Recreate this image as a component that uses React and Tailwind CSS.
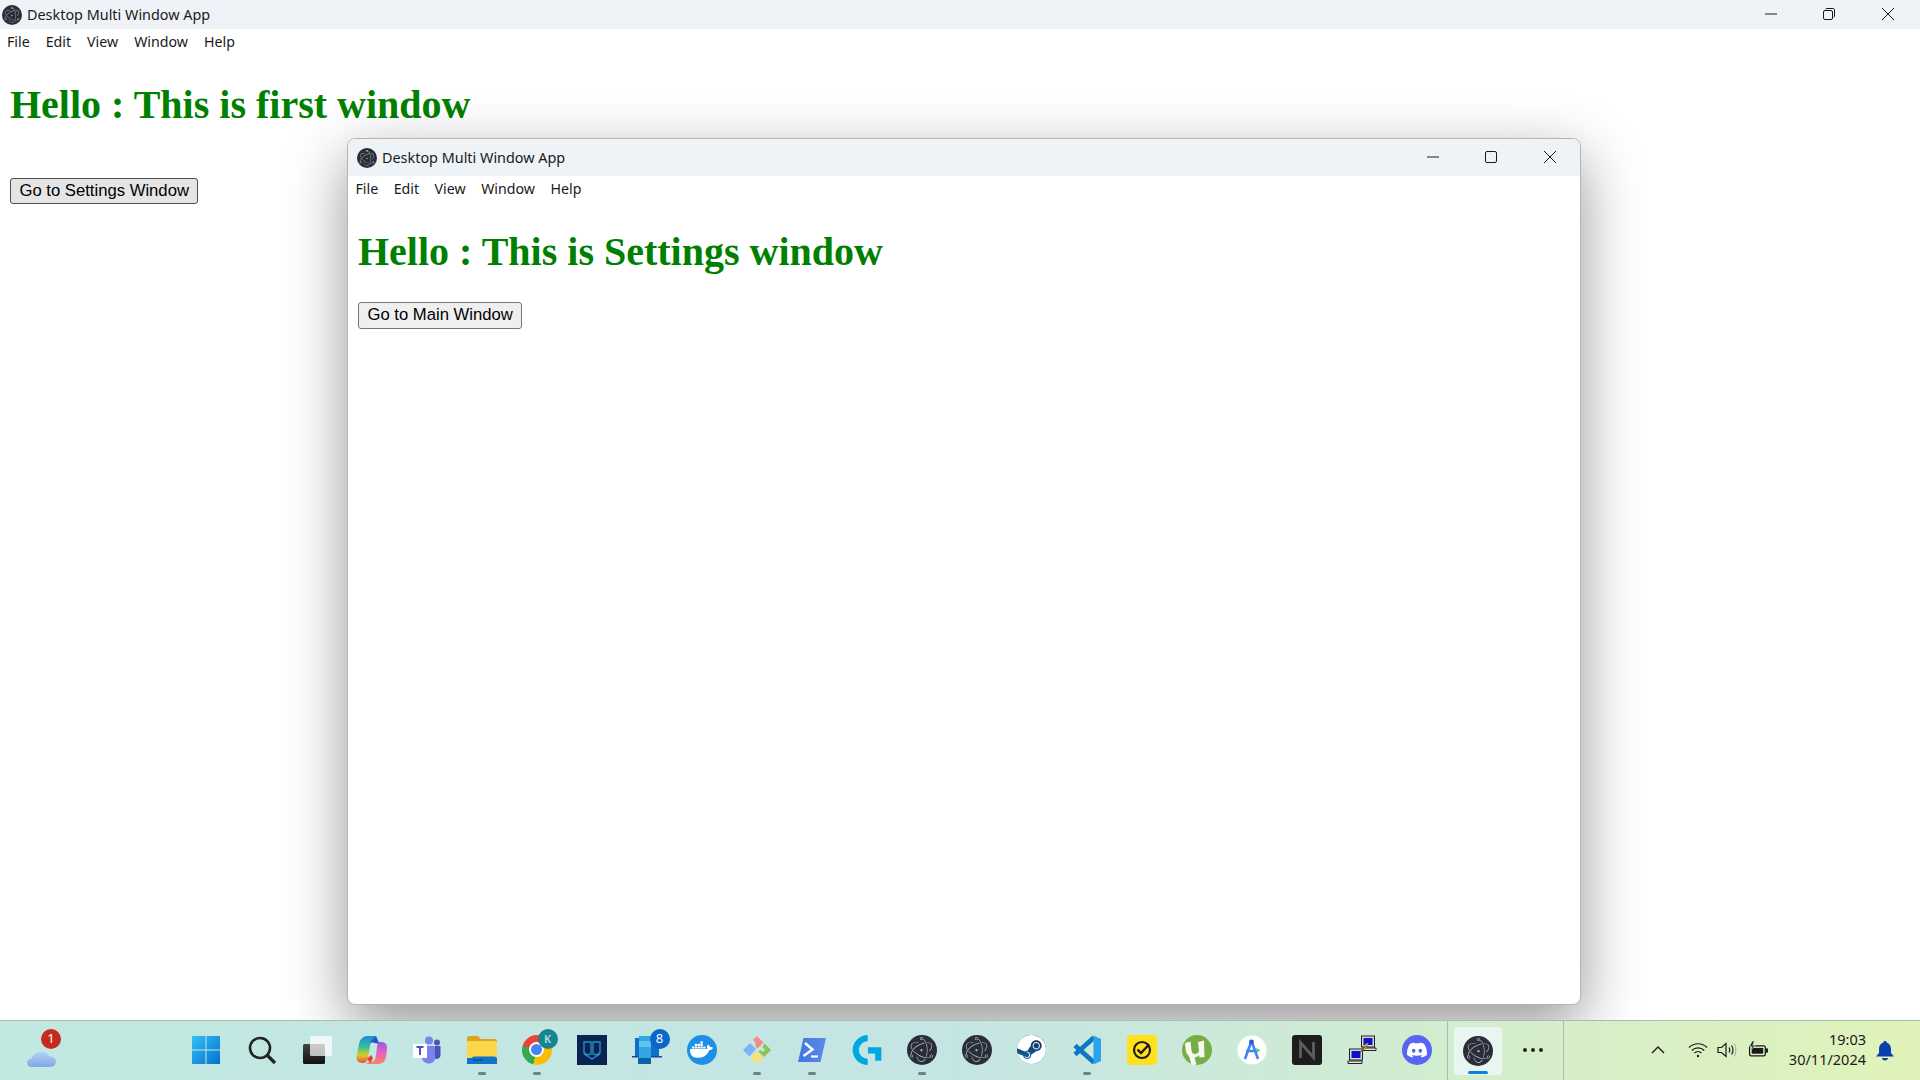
import React from "react";
import { SiElectron, SiDocker, SiSteam, SiDiscord, SiLogitechg } from "react-icons/si";

const ui = "font-['Noto_Sans',sans-serif]";

function ElectronIcon({ size = 30 }) {
  return (
    <span className="flex items-center justify-center rounded-full bg-[#2a2c38] text-[#a9bcc6]" style={{ width: size, height: size }}>
      <SiElectron size={Math.round(size * 0.82)} />
    </span>
  );
}

function Minimize() {
  return <svg width="14" height="14" viewBox="0 0 14 14"><path d="M1 7h12" stroke="#1a1a1a" strokeWidth="1" /></svg>;
}
function Maximize() {
  return <svg width="14" height="14" viewBox="0 0 14 14"><rect x="1.5" y="1.5" width="11" height="11" rx="1.5" fill="none" stroke="#1a1a1a" strokeWidth="1" /></svg>;
}
function Restore() {
  return (
    <svg width="14" height="14" viewBox="0 0 14 14" fill="none" stroke="#1a1a1a" strokeWidth="1">
      <rect x="1.5" y="3.5" width="9" height="9" rx="1.5" />
      <path d="M3.5 2.2C4 1.6 4.4 1.5 5 1.5h6c1 0 1.5.6 1.5 1.5v6c0 .6-.2 1-.7 1.4" />
    </svg>
  );
}
function Close() {
  return <svg width="14" height="14" viewBox="0 0 14 14"><path d="M1 1l12 12M13 1L1 13" stroke="#1a1a1a" strokeWidth="1" /></svg>;
}

function Menu({ items, className }) {
  return (
    <div className={className}>
      {items.map((m) => <span key={m}>{m}</span>)}
    </div>
  );
}
const menus = ["File", "Edit", "View", "Window", "Help"];

function Win11() {
  return (
    <svg width="30" height="30" viewBox="0 0 30 30" className="mr-[2px]">
      <defs>
        <linearGradient id="w" x1="0" y1="0" x2="1" y2="1">
          <stop offset="0" stopColor="#33c1f5" /><stop offset="1" stopColor="#0670cf" />
        </linearGradient>
      </defs>
      <path d="M1 1h13.500v13.500H1zM15.500 1H29v13.500H15.500zM1 15.500h13.500V29H1zM15.500 15.500H29V29H15.500z" fill="url(#w)" />
    </svg>
  );
}
function Search() {
  return (
    <svg width="30" height="30" viewBox="0 0 30 30" fill="none" stroke="#222" strokeWidth="2.6">
      <circle cx="13" cy="13" r="10" />
      <path d="M20.5 20.5L28 28" strokeWidth="3.2" />
    </svg>
  );
}
function TaskView() {
  return (
    <svg width="30" height="30" viewBox="0 0 30 30">
      <defs>
        <linearGradient id="tv" x1="0" y1="0" x2="0" y2="1"><stop offset="0" stopColor="#444" /><stop offset="1" stopColor="#111" /></linearGradient>
      </defs>
      <rect x="1" y="9" width="22" height="20" rx="1.5" fill="url(#tv)" />
      <rect x="8" y="1" width="22" height="20" rx="1.5" fill="#fff" fillOpacity="0.72" />
    </svg>
  );
}
function Copilot() {
  return (
    <svg width="32" height="30" viewBox="0 0 32 30">
      <defs>
        <linearGradient id="c1" x1="0" y1="0" x2="0" y2="1"><stop offset="0" stopColor="#1e88e0" /><stop offset=".4" stopColor="#30c09a" /><stop offset=".7" stopColor="#d8cc30" /><stop offset="1" stopColor="#ee5040" /></linearGradient>
        <linearGradient id="c2" x1="0" y1="0" x2="0" y2="1"><stop offset="0" stopColor="#9a5ce6" /><stop offset=".5" stopColor="#e860c0" /><stop offset="1" stopColor="#f98a5a" /></linearGradient>
      </defs>
      <path d="M12 1h8l1 5h-2c-3 0-4.500 2-5 5l-2 12c-.5 3-2.500 5-5 5-4 0-7-2-6.500-6.500L3 9C4 4 7 1 12 1z" fill="url(#c1)" />
      <path d="M25 7c4 0 6.500 2.500 6 7l-1 8c-.8 5-4 7-8 7H10.500l1.500-2c2 0 5 0 6-1 2-2 2-7 3-14 .3-3 1.500-5 3.500-5z" fill="url(#c2)" />
      <path d="M14 7l6-6 3.500 8z" fill="#2a55d8" />
      <path d="M11 24l4-4 2 3-2.500 5z" fill="#e8403a" />
    </svg>
  );
}
function Teams() {
  return (
    <svg width="28" height="28" viewBox="0 0 28 28">
      <circle cx="16" cy="4.500" r="4" fill="#7b83eb" />
      <circle cx="24" cy="6.500" r="3" fill="#4b53bc" />
      <path d="M20 10h7.500v9c0 2.500-2 4-4 4s-3.500-1-3.500-3z" fill="#4b53bc" />
      <path d="M9 10h13v12c0 3-2.500 5.500-6 5.500s-7-2.500-7-6z" fill="#7b83eb" />
      <rect x="0" y="8" width="14" height="14" fill="#fff" />
      <path d="M3.500 11h7M7 11v8" stroke="#4b53bc" strokeWidth="2" fill="none" />
    </svg>
  );
}
function Files() {
  return (
    <svg width="32" height="30" viewBox="0 0 32 30">
      <path d="M1 3c0-1 .8-2 2-2h9l3 3h14c1.200 0 2 1 2 2v3H1z" fill="#dfa21f" />
      <rect x="1" y="6" width="30" height="23" rx="1" fill="#fbd54a" />
      <path d="M1 23h4c1 0 2-1.500 3-1.500h20c2 0 3 1 3 2V29H1z" fill="#0f75c8" />
      <path d="M7 25h10" stroke="#0a4f94" strokeWidth="1.400" />
    </svg>
  );
}
function Chrome() {
  return (
    <span className="relative flex h-[30px] w-[30px] items-center justify-center rounded-full bg-[conic-gradient(#ea4335_0deg_75deg,#fbbc04_75deg_195deg,#34a853_195deg_285deg,#ea4335_285deg)]">
      <span className="flex h-[15px] w-[15px] items-center justify-center rounded-full bg-white">
        <span className="h-[11px] w-[11px] rounded-full bg-[#4285f4]" />
      </span>
      <span className="absolute right-[-6px] top-[-6px] flex h-[20px] w-[20px] items-center justify-center rounded-full bg-[#15868f] text-[11px] font-semibold leading-none text-[#b9dbe8]">K</span>
    </span>
  );
}
function Sentinel() {
  return (
    <svg width="30" height="30" viewBox="0 0 30 30">
      <rect width="30" height="30" fill="#0a2350" />
      <path d="M7 7h7v12l-3 1-4-2zM23 7h-7v12l3 1 4-2zM7 19l8 5 8-5" fill="none" stroke="#1e8fc8" strokeWidth="1.400" />
    </svg>
  );
}
function Outlook() {
  return (
    <span className="relative flex h-[30px] w-[30px]">
      <svg width="30" height="30" viewBox="0 0 30 30">
        <path d="M3 3h24v19H3z" fill="#0f6fc6" />
        <path d="M0 21h30v1.500H0z" fill="#0b4f94" />
        <path d="M7 1h12v22H7z" fill="#31a6e6" />
        <path d="M7 6h12v6H7z" fill="#60c3ef" />
        <path d="M6 23h13v6H6z" fill="#0c61ad" />
      </svg>
      <span className="absolute right-[-8px] top-[-6px] flex h-[20px] w-[20px] items-center justify-center rounded-full bg-[#0a66c8] text-[13px] leading-none text-white">8</span>
    </span>
  );
}
function Docker() {
  return (
    <span className="flex h-[30px] w-[30px] items-center justify-center rounded-full bg-[#1d8fe6] text-white">
      <SiDocker size={23} />
    </span>
  );
}
function GitColor() {
  return (
    <svg width="30" height="30" viewBox="0 0 30 30">
      <path d="M15 1l6.500 6.500-6 6-2-2V7.500L11 5z" fill="#f58a8a" />
      <path d="M22.500 8.500L29 15l-7 7-5.500-5.500 1.500-1.500 3 2 2-2-2.500-3z" fill="#8cc152" />
      <path d="M14.500 17L22 22l-7 7-7-7z" fill="#fbe07a" />
      <path d="M8 8l6 6-6.500 7.500L1 15z" fill="#7fb2f8" />
    </svg>
  );
}
function PowerShell() {
  return (
    <svg width="30" height="26" viewBox="0 0 30 26">
      <defs><linearGradient id="ps" x1="0" y1="0" x2="1" y2="0"><stop offset="0" stopColor="#3f77dc" /><stop offset="1" stopColor="#5a8ce8" /></linearGradient></defs>
      <path d="M6.500 1H29l-5.500 24H1z" fill="url(#ps)" />
      <path d="M8 6l7.500 6.500L6.500 19" fill="none" stroke="#fff" strokeWidth="2.400" />
      <path d="M14 19.500h7" stroke="#fff" strokeWidth="2.200" />
    </svg>
  );
}
function LogiG() {
  return <SiLogitechg size={30} color="#00a8e0" />;
}
function Steam() {
  return (
    <span className="flex h-[29px] w-[29px] items-center justify-center rounded-full bg-gradient-to-b from-[#0b1f4a] to-[#1379b5] text-white">
      <SiSteam size={29} />
    </span>
  );
}
function VSCode() {
  return (
    <svg width="30" height="30" viewBox="0 0 30 30">
      <path d="M22 2.500L3 19.500M22 27.500L3 10.500" fill="none" stroke="#0a78c4" strokeWidth="4.800" />
      <path d="M21.500 .5L29 4v22l-7.500 3.500z" fill="#28a3ee" />
    </svg>
  );
}
function Norton() {
  return (
    <svg width="30" height="30" viewBox="0 0 30 30">
      <rect width="30" height="30" rx="4" fill="#ffe01b" />
      <circle cx="15" cy="15" r="8" fill="none" stroke="#1c1c1c" strokeWidth="2.200" />
      <path d="M10.500 14.500l3.500 3.500 8-8.500" fill="none" stroke="#1c1c1c" strokeWidth="2.400" />
    </svg>
  );
}
function UTorrent() {
  return (
    <svg width="30" height="30" viewBox="0 0 30 30">
      <circle cx="15" cy="15" r="15" fill="#76ad47" />
      <path d="M3 8l5.500-1.500 1 9c.3 2.500 1.500 3.500 3.500 3.500s3.500-1 4-3l-1-9 6-1.500.5 16.500-5 .5-.5-2.500c-1 1.500-2.500 2.500-4.500 2.500l2 7-5 .5L7 21c-2-1.500-3-3.500-3.300-6z" fill="#f4f8ee" />
    </svg>
  );
}
function AndroidStudio() {
  return (
    <svg width="30" height="30" viewBox="0 0 30 30">
      <circle cx="15" cy="15" r="14.500" fill="#fff" />
      <path d="M14.500 6L8 24M14.500 6L21 24M9 16h11" fill="none" stroke="#4285f4" strokeWidth="2.600" />
      <circle cx="14.500" cy="7" r="2.400" fill="#2a5fc0" />
      <path d="M19 13l4.500 2-3.500 2.500z" fill="#3ddc84" />
    </svg>
  );
}
function NIcon() {
  return (
    <svg width="30" height="30" viewBox="0 0 30 30">
      <rect width="30" height="30" rx="3" fill="#1d1d1d" />
      <path d="M8.500 23V7.500L21.500 22.500V7" fill="none" stroke="#5e5e5e" strokeWidth="2.800" />
    </svg>
  );
}
function Putty() {
  return (
    <svg width="30" height="30" viewBox="0 0 30 30">
      <rect x="14.500" y="1" width="13" height="11" fill="#d8d8d8" stroke="#222" />
      <rect x="16.500" y="3" width="9" height="7" fill="#1010d0" />
      <path d="M16 13h13v2.500H16z" fill="#e8e8e8" stroke="#222" />
      <rect x="2.500" y="14" width="13" height="11" fill="#d8d8d8" stroke="#222" />
      <rect x="4.500" y="16" width="9" height="7" fill="#1010d0" />
      <path d="M1 26h14v2.500H1z" fill="#e8e8e8" stroke="#222" />
      <path d="M20 8l-5 4h3l-6 6 9-6h-3l4-4z" fill="#f4d21c" stroke="#333" strokeWidth=".5" />
    </svg>
  );
}
function Discord() {
  return (
    <span className="flex h-[30px] w-[30px] items-center justify-center rounded-full bg-[#5865f2] text-white">
      <SiDiscord size={20} />
    </span>
  );
}

const icons = [
  [Win11, 0], [Search, 0], [TaskView, 0], [Copilot, 0], [Teams, 0], [Files, 1], [Chrome, 1], [Sentinel, 0], [Outlook, 0],
  [Docker, 0], [GitColor, 1], [PowerShell, 1], [LogiG, 0], [ElectronIcon, 1], [ElectronIcon, 0], [Steam, 0], [VSCode, 1],
  [Norton, 0], [UTorrent, 0], [AndroidStudio, 0], [NIcon, 0], [Putty, 0], [Discord, 0],
];

function Weather() {
  return (
    <span className="relative flex h-[40px] w-[40px] items-end justify-center">
      <svg width="31" height="21" viewBox="0 0 32 22" className="mb-[3px]">
        <defs><linearGradient id="cl" x1="0" y1="0" x2="0" y2="1"><stop offset="0" stopColor="#b4d0f8" /><stop offset="1" stopColor="#7fa8e8" /></linearGradient></defs>
        <path d="M6 21C3 21 1 19 1 16.500S3 12 6 12c1-4 5-7 10-7 4 0 7 2 8 5 4 0 7 2 7 5.500S28 21 24 21z" fill="url(#cl)" />
      </svg>
      <span className="absolute right-[0px] top-[-2px] flex h-[20px] w-[20px] items-center justify-center rounded-full bg-[#c42b1c] text-[13px] leading-none text-white">1</span>
    </span>
  );
}

function Taskbar() {
  return (
    <div className={`relative z-10 flex h-[60px] shrink-0 items-center border-t border-[#a4bdb7] bg-gradient-to-r from-[#c1e8e1] via-[#c5e5e4] via-50% to-[#e0f3b8] ${ui}`}>
      <div className="flex w-[82px] justify-center"><Weather /></div>
      <div className="w-[97px]" />
      {icons.map(([Icon, running], i) => (
        <div key={i} className="relative flex h-[59px] w-[55px] items-center justify-center pb-[2px]">
          <Icon />
          {running ? <span className="absolute bottom-[5px] h-[3px] w-[8px] rounded-full bg-[#6f8182]" /> : null}
        </div>
      ))}
      <div className="ml-[3px] h-[59px] w-px bg-[#a4bdb7]" />
      <div className="relative ml-[6px] flex h-[48px] w-[48px] items-center justify-center rounded-[4px] bg-[#e9f5f1]">
        <ElectronIcon />
        <span className="absolute bottom-[1px] h-[3px] w-[20px] rounded-full bg-[#0f7fdc]" />
      </div>
      <div className="ml-[3px] flex w-[55px] items-center justify-center gap-[4px] pb-[2px]">
        <span className="h-[4px] w-[4px] rounded-full bg-[#222]" />
        <span className="h-[4px] w-[4px] rounded-full bg-[#222]" />
        <span className="h-[4px] w-[4px] rounded-full bg-[#222]" />
      </div>
      <div className="ml-[3px] h-[59px] w-px bg-[#a4bdb7]" />
      <div className="ml-[79px] flex w-[30px] justify-center pb-[2px]">
        <svg width="14" height="8" viewBox="0 0 14 8"><path d="M1 7l6-6 6 6" fill="none" stroke="#1a1a1a" strokeWidth="1.400" /></svg>
      </div>
      <div className="ml-[11px] flex w-[28px] justify-center pb-[2px]">
        <svg width="20" height="16" viewBox="0 0 20 16" fill="none" stroke="#1a1a1a" strokeWidth="1.200">
          <path d="M1 5.500c5-5 13-5 18 0M3.800 8.500c3.500-3.500 9-3.500 12.400 0M6.500 11c2-2 5-2 7 0" />
          <circle cx="10" cy="14" r="1.200" fill="#1a1a1a" stroke="none" />
        </svg>
      </div>
      <div className="ml-[1px] flex w-[28px] justify-center pb-[2px]">
        <svg width="20" height="16" viewBox="0 0 20 16" fill="none" stroke="#1a1a1a" strokeWidth="1.200">
          <path d="M1 5.500h3.500L9 1.500v13l-4.500-4H1z" />
          <path d="M12 5.500c1 1.500 1 3.500 0 5M14.500 3.500c2 2.500 2 6.500 0 9" />
          <path d="M17 1.500c2.500 3.500 2.500 9.500 0 13" stroke="#a9b5ad" />
        </svg>
      </div>
      <div className="ml-[3px] flex w-[28px] justify-center pb-[2px]">
        <svg width="21" height="17" viewBox="0 0 20 16">
          <rect x="1.500" y="4.500" width="15" height="9.500" rx="1.500" fill="none" stroke="#1a1a1a" strokeWidth="1.200" />
          <rect x="3.500" y="6.500" width="11" height="5.500" fill="#1a1a1a" />
          <rect x="17" y="7" width="2" height="4" fill="#1a1a1a" />
          <path d="M4 0L1.500 5h2.500L2.500 9 7 4H4.500L6 0z" fill="#1a1a1a" stroke="#c6e8d6" strokeWidth=".6" />
        </svg>
      </div>
      <div className="ml-[4px] w-[90px] pb-[4px] text-right text-[14.5px] leading-[20px] text-[#1a1a1a]">
        <div>19:03</div>
        <div>30/11/2024</div>
      </div>
      <div className="ml-[7px] flex w-[24px] justify-center">
        <svg width="18" height="20" viewBox="0 0 18 20">
          <path d="M9 0c1 0 1.500.7 1.700 1.600C13.500 2.500 15 5 15 8v4l3 3.500H0L3 12V8c0-3 1.500-5.500 4.300-6.400C7.500.7 8 0 9 0z" fill="#0c3fb0" />
          <path d="M6 17h6c0 1.500-1.300 2.500-3 2.500S6 18.500 6 17z" fill="#0c3fb0" />
        </svg>
      </div>
    </div>
  );
}

export default function App() {
  return (
    <div className="flex h-screen w-full flex-col overflow-hidden bg-white">
      <div className="relative min-h-0 flex-1">
        <div className={`flex h-[29px] items-center bg-[#eff3f8] pl-[2px] text-[14.4px] text-[#1a1a1a] ${ui}`}>
          <ElectronIcon size={20} />
          <span className="ml-[5px]">Desktop Multi Window App</span>
          <div className="ml-auto flex pb-[1px]">
            <span className="flex w-[58px] justify-center pl-[1px]"><Minimize /></span>
            <span className="flex w-[59px] justify-center"><Restore /></span>
            <span className="mr-[3px] flex w-[59px] justify-center"><Close /></span>
          </div>
        </div>
        <Menu items={menus} className={`flex h-[26px] items-center gap-[16px] pl-[7px] text-[14.2px] text-[#1a1a1a] ${ui}`} />
        <div className="pl-[10px]">
          <h1 className="mt-[26.5px] font-['Liberation_Serif',serif] text-[40px] font-bold leading-[46px] text-[#008000]">Hello : This is first window</h1>
          <button className="mt-[50.5px] h-[26px] rounded-[3px] border border-[#4f4f4f] bg-[#e5e5e5] px-[8.5px] font-['Liberation_Sans',sans-serif] text-[16.67px] leading-none text-black">Go to Settings Window</button>
        </div>

        <div className="absolute left-[347px] top-[138px] flex h-[867px] w-[1234px] flex-col overflow-hidden rounded-[8px] border border-[#b4b4b4] bg-white shadow-[0_20px_60px_rgba(0,0,0,0.42)]">
          <div className={`flex h-[37px] shrink-0 items-center bg-[#eef3f8] pl-[9px] text-[14.4px] text-[#1a1a1a] ${ui}`}>
            <ElectronIcon size={20} />
            <span className="ml-[5px]">Desktop Multi Window App</span>
            <div className="ml-auto flex pb-[1px]">
              <span className="flex w-[58px] justify-center"><Minimize /></span>
              <span className="flex w-[59px] justify-center pr-[1px]"><Maximize /></span>
              <span className="flex w-[59px] justify-center pr-[1px]"><Close /></span>
            </div>
          </div>
          <Menu items={menus} className={`flex h-[26px] shrink-0 items-center gap-[15.5px] pl-[7.5px] text-[14.2px] text-[#1a1a1a] ${ui}`} />
          <div className="pl-[10px]">
            <h1 className="mt-[27px] font-['Liberation_Serif',serif] text-[40px] font-bold leading-[46px] text-[#008000]">Hello : This is Settings window</h1>
            <button className="mt-[26.5px] h-[27px] rounded-[3px] border border-[#767676] bg-[#efefef] px-[8.5px] font-['Liberation_Sans',sans-serif] text-[16.67px] leading-none text-black">Go to Main Window</button>
          </div>
        </div>
      </div>
      <Taskbar />
    </div>
  );
}
